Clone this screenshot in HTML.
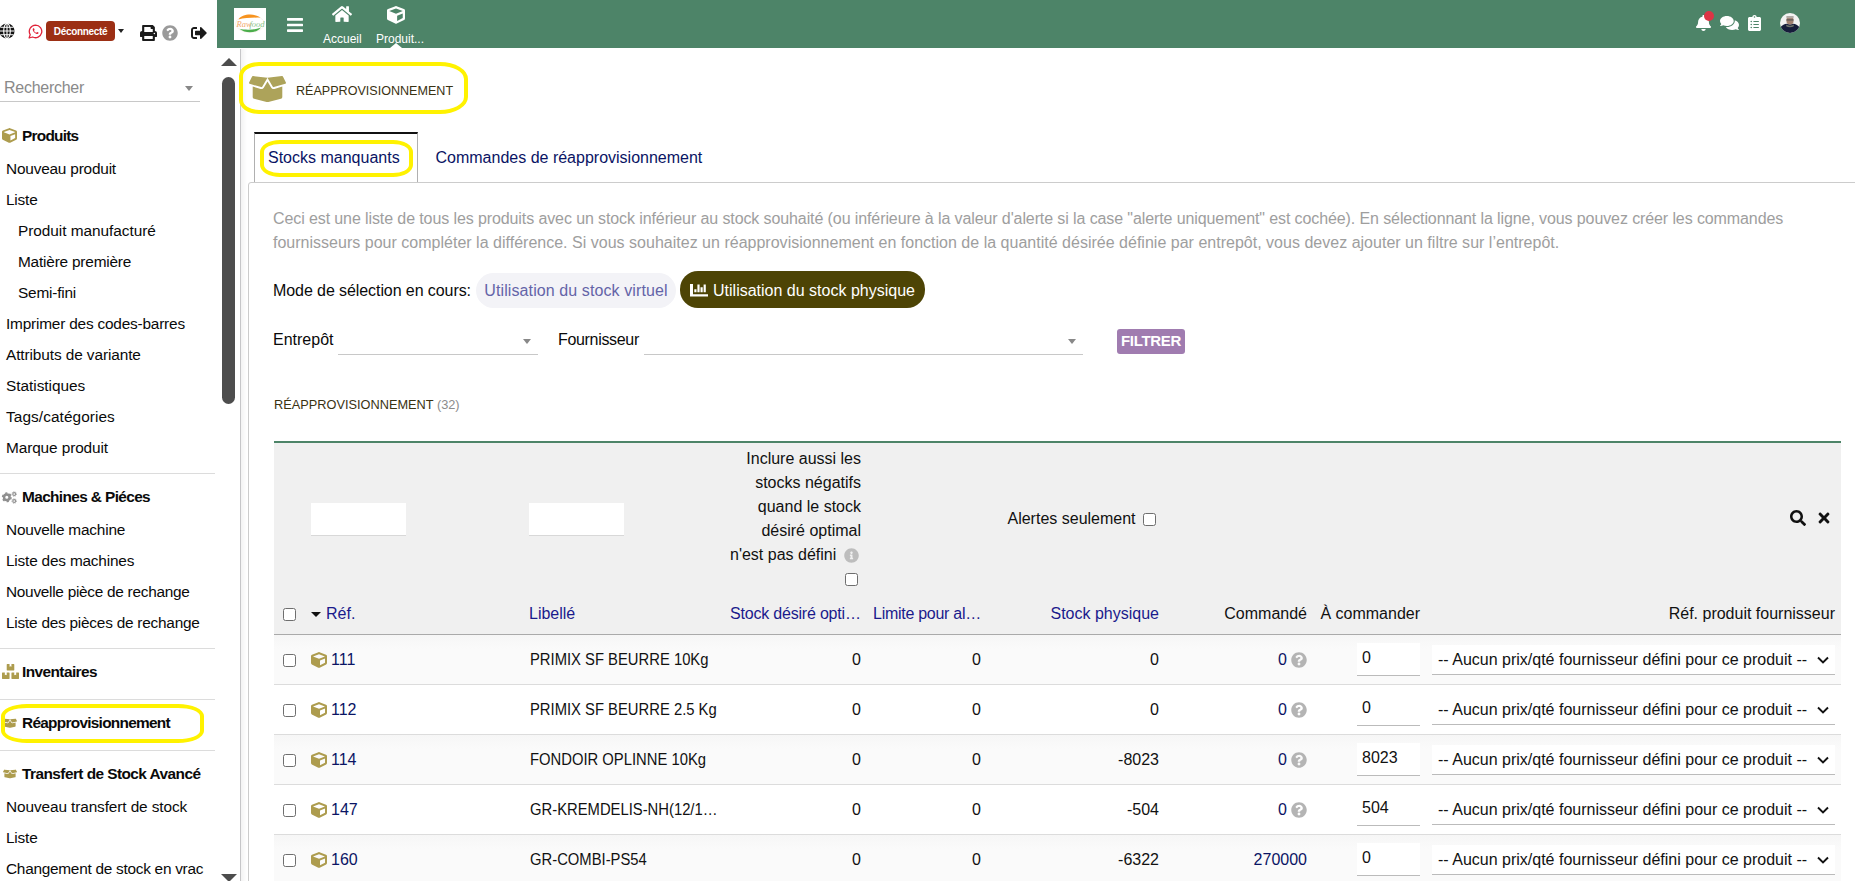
<!DOCTYPE html>
<html lang="fr">
<head>
<meta charset="utf-8">
<title>Réapprovisionnement</title>
<style>
*{box-sizing:border-box}
html,body{margin:0;padding:0}
body{width:1855px;height:881px;overflow:hidden;background:#fff;font-family:"Liberation Sans",sans-serif;color:#000;position:relative;font-size:15px}
.abs{position:absolute}
svg{display:block}
/* ---------- left column ---------- */
#left{position:absolute;left:0;top:0;width:217px;height:881px;background:#fff;overflow:hidden}
#left .ic{position:absolute}
.badge{position:absolute;left:46px;top:21px;width:69px;height:20px;border-radius:4px;background:#9c2f14;color:#fff;font-weight:700;font-size:10px;line-height:21px;text-align:center;letter-spacing:-.32px}
.search{position:absolute;left:0;top:72px;width:200px;height:30px;border-bottom:1px solid #c8c8c8}
.search span{position:absolute;left:4px;top:5px;font-size:16px;line-height:22px;color:#8a8a8a;letter-spacing:-.27px}
.search i{position:absolute;left:185px;top:14px;width:0;height:0;border-left:4px solid transparent;border-right:4px solid transparent;border-top:5px solid #888}
.menu{position:absolute;left:0;width:217px;margin:0;padding:0;list-style:none}
.menu li{position:absolute;left:6px;height:20px;line-height:20px;font-size:15.4px;letter-spacing:-.2px;white-space:nowrap;color:#0a0a0a}
.menu li.sub{left:18px}
.menu li.h{left:22px;font-weight:700;letter-spacing:-.75px}
.hr{position:absolute;left:0;width:215px;height:1px;background:#dcdcdc}
/* ---------- scrollbar ---------- */
#sb{position:absolute;left:217px;top:48px;width:23px;height:833px;background:#fff}
#sb .up{position:absolute;left:3.5px;top:10px;width:0;height:0;border-left:8px solid transparent;border-right:8px solid transparent;border-bottom:8px solid #4d4d4d}
#sb .dn{position:absolute;left:3.5px;top:826px;width:0;height:0;border-left:8px solid transparent;border-right:8px solid transparent;border-top:8px solid #4d4d4d}
#sb .th{position:absolute;left:5px;top:29px;width:13px;height:327px;border-radius:6.5px;background:#4d4d4d}
/* ---------- top bar ---------- */
#top{position:absolute;left:217px;top:0;width:1638px;height:48px;background:#4d8468}
#top .lbl{position:absolute;color:#fff;font-size:12px;line-height:14px;white-space:nowrap}
/* ---------- main ---------- */
#main{position:absolute;left:240px;top:49px;width:1615px;height:832px;border-left:1px solid #c6c6c8;background:linear-gradient(to right,#f3f3f3,#fff 6px)}
.hl{position:absolute;border:3.5px solid #fff200;border-radius:22px}

#content{position:absolute;left:0;top:0;width:1855px;height:881px}
.ttl{position:absolute;font-size:13.3px;line-height:20px;color:#3a3212;white-space:nowrap;transform-origin:0 50%;transform:scaleX(.945)}
.ttl2{position:absolute;font-size:13.3px;line-height:20px;color:#3a3212;white-space:nowrap;transform-origin:0 50%;transform:scaleX(.96)}
.ttl2 span{color:#8c8c8c}
.tabbox{position:absolute;left:248px;top:182px;width:1620px;height:720px;border:1px solid #ccc;border-radius:3px 0 0 0;background:#fff}
.tab1{position:absolute;left:254px;top:132px;width:164px;height:50px;border:1px solid #b0b0b0;border-top:2px solid #111;border-bottom:none;background:#fff}
.tabt{position:absolute;font-size:16px;line-height:20px;color:#0a1464;white-space:nowrap}
.desc{position:absolute;margin:0;font-size:16px;line-height:24px;color:#9e9e9e;white-space:nowrap;letter-spacing:-.06px}
.t16{position:absolute;font-size:16px;line-height:20px;color:#0a0a0a;white-space:nowrap}
.pill{position:absolute;height:35px;line-height:35px;border-radius:18px;text-align:center;font-size:16px;white-space:nowrap}
.p1{background:#f3f3f7;color:#6464a8;letter-spacing:.1px}
.p2{background:#4d4405;color:#fff}
.sel{position:absolute;height:29px;border-bottom:1px solid #c8c8c8}
.sel i{position:absolute;right:7px;top:13px;width:0;height:0;border-left:4px solid transparent;border-right:4px solid transparent;border-top:5px solid #888}
.btn{position:absolute;width:68px;height:25px;line-height:23px;border-radius:3px;background:#a07cb0;color:#fff;font-weight:700;font-size:15px;text-align:center;letter-spacing:-.3px}

.lst{position:absolute;left:274px;top:441px;width:1567px;table-layout:fixed;border-collapse:collapse;border-top:2px solid #4d8468;font-size:16px;color:#111}
.lst td,.lst th{padding:2px 6px 0;vertical-align:middle;white-space:nowrap;overflow:hidden;font-weight:400;line-height:24px}
.lst .r{text-align:right}.lst .l{text-align:left}
.lst thead tr{background:#f0f0f0}
.lst tr.f{height:150px}
.lst tr.h{height:41px}
.lst tr.h th{color:#1a1a8c;border-bottom:1px solid #aaa;height:42px}
.lst tr.h th.k{color:#111}
.lst tbody tr{height:50px;background:#fff}
.lst tbody tr:nth-child(odd){background:linear-gradient(#f6f6f6,#fafafa 30%,#fafafa)}
.lst tbody td{border-bottom:1px solid #dcdcdc;height:50px}
.lst a{color:#0a1464}
.ck{display:inline-block;width:13px;height:13px;border:1px solid #6e6e6e;border-radius:2.5px;background:#fff;vertical-align:-2px;margin:0 3px}
.inp{position:relative;top:1px;display:inline-block;width:95px;height:33px;background:#fff;border-bottom:1px solid #d8d8d8;vertical-align:middle}
.car{display:inline-block;width:0;height:0;border-left:5px solid transparent;border-right:5px solid transparent;border-top:5.5px solid #111;margin-right:5px;margin-left:0;vertical-align:2px}
.cb{display:inline-block;vertical-align:-3px;margin-right:4px}
.q{display:inline-block;vertical-align:-3px;margin-left:4px}
.inf{display:inline-block;vertical-align:-3px;margin:0 4px 0 3px}
.si{display:inline-block;vertical-align:middle;margin-right:12px;position:relative;top:-1px}
.xi{display:inline-block;vertical-align:middle;margin-right:5px;position:relative;top:-1px}
.nm{display:inline-block;transform-origin:0 50%;transform:scaleX(.925);vertical-align:middle;margin-left:.5px}
.qty{position:relative;top:-1px;display:inline-block;width:63px;height:33px;line-height:30px;background:#fff;border-bottom:1px solid #bbb;text-align:left;padding-left:5px;vertical-align:middle}
.slc{display:inline-block;width:403px;height:30px;line-height:29px;background:#fff;border-bottom:1px solid #bbb;text-align:left;padding-left:6px;vertical-align:middle;position:relative}
.chv{position:absolute;right:6px;top:11px}
</style>
</head>
<body>
<div id="left">
<!-- globe -->
<svg class="ic" style="left:-1px;top:23px" width="16" height="16" viewBox="0 0 16 16"><circle cx="8" cy="8" r="7.6" fill="#111"/><g stroke="#fff" stroke-width="1.1" fill="none"><ellipse cx="8" cy="8" rx="3.3" ry="7.6"/><path d="M8 .4v15.200M.4 8h15.200M1.500 4.300h13M1.500 11.700h13"/></g></svg>
<!-- whatsapp -->
<svg class="ic" style="left:28px;top:24px" width="15" height="15" viewBox="0 0 15 15"><path d="M7.600 1.100a6.300 6.300 0 0 0-5.400 9.500L1.100 14l3.500-1a6.300 6.300 0 1 0 3-11.900z" fill="none" stroke="#e0243a" stroke-width="1.300" stroke-linejoin="round"/><path d="M5.500 4.300c-.3 0-.8.500-.8 1.300 0 1 .8 2.300 1.900 3.200 1.100.9 2.300 1.300 2.900 1.200.6-.1 1.100-.600 1.100-1 0-.2-.1-.3-.3-.4l-1-.5c-.2-.1-.4 0-.5.100l-.4.500c-.1.100-.3.100-.4 0-.9-.4-1.500-1-1.900-1.800-.1-.1 0-.3.100-.4l.3-.4c.1-.1.100-.3.100-.4l-.5-1.100c-.1-.2-.3-.3-.6-.3z" fill="#e0243a"/></svg>
<div class="badge">Déconnecté</div>
<i class="abs" style="left:118px;top:29px;width:0;height:0;border-left:3.5px solid transparent;border-right:3.5px solid transparent;border-top:4px solid #222"></i>
<!-- print -->
<svg class="ic" style="left:140px;top:25px" width="17" height="16" viewBox="0 0 512 512" preserveAspectRatio="none"><path fill="#1b1b1b" d="M448 192V77.250c0-8.490-3.370-16.620-9.370-22.630L393.370 9.370c-6-6-14.140-9.370-22.630-9.370H96C78.330 0 64 14.330 64 32v160c-35.350 0-64 28.650-64 64v112c0 8.840 7.160 16 16 16h48v96c0 17.670 14.330 32 32 32h320c17.670 0 32-14.330 32-32v-96h48c8.840 0 16-7.160 16-16V256c0-35.350-28.650-64-64-64zm-64 256H128v-96h256v96zm0-224H128V64h192v48c0 8.840 7.160 16 16 16h48v96zm48 72c-13.250 0-24-10.750-24-24 0-13.260 10.750-24 24-24s24 10.740 24 24c0 13.250-10.750 24-24 24z"/></svg>
<!-- question -->
<svg class="ic" style="left:162px;top:25px" width="16" height="16" viewBox="0 0 512 512"><path fill="#9a9a9a" d="M504 256c0 136.997-111.043 248-248 248S8 392.997 8 256C8 119.083 119.043 8 256 8s248 111.083 248 248zM262.655 90c-54.497 0-89.255 22.957-116.549 63.758-3.536 5.286-2.353 12.415 2.715 16.258l34.699 26.310c5.205 3.947 12.621 3.008 16.665-2.122 17.864-22.658 30.113-35.797 57.303-35.797 20.429 0 45.698 13.148 45.698 32.958 0 14.976-12.363 22.667-32.534 33.976C247.128 238.528 216 254.941 216 296v4c0 6.627 5.373 12 12 12h56c6.627 0 12-5.373 12-12v-1.333c0-28.462 83.186-29.647 83.186-106.667 0-58.002-60.165-102-116.531-102zM256 338c-25.365 0-46 20.635-46 46 0 25.364 20.635 46 46 46s46-20.636 46-46c0-25.365-20.635-46-46-46z"/></svg>
<!-- sign-out -->
<svg class="ic" style="left:191px;top:25px" width="16" height="16" viewBox="0 0 512 512"><path fill="#1b1b1b" d="M497 273L329 441c-15 15-41 4.500-41-17v-96H152c-13.300 0-24-10.700-24-24v-96c0-13.300 10.700-24 24-24h136V88c0-21.400 25.900-32 41-17l168 168c9.300 9.400 9.300 24.600 0 34zM192 436v-40c0-6.600-5.400-12-12-12H96c-17.700 0-32-14.300-32-32V160c0-17.700 14.300-32 32-32h84c6.600 0 12-5.400 12-12V76c0-6.600-5.400-12-12-12H96c-53 0-96 43-96 96v192c0 53 43 96 96 96h84c6.600 0 12-5.400 12-12z"/></svg>

<div class="search"><span>Rechercher</span><i></i></div>

<svg class="ic" style="left:2px;top:128px" width="15" height="15" viewBox="0 0 512 512"><path fill="#ad9c4e" d="M239.100 6.300l-208 78c-18.700 7-31.100 25-31.100 45v225.100c0 18.200 10.300 34.800 26.500 42.900l208 104c13.500 6.800 29.400 6.800 42.900 0l208-104c16.300-8.100 26.500-24.800 26.500-42.900V129.300c0-20-12.400-37.900-31.100-44.900l-208-78C262 2.200 250 2.200 239.100 6.300zM256 68.400l192 72v1.100l-192 78-192-78v-1.100l192-72zm32 356V275.500l160-65v133.900l-160 80z"/></svg>
<ul class="menu" style="top:0">
<li class="h" style="top:126px">Produits</li>
<li style="top:159px">Nouveau produit</li>
<li style="top:190px">Liste</li>
<li class="sub" style="top:221px;letter-spacing:-0.04px">Produit manufacturé</li>
<li class="sub" style="top:252px">Matière première</li>
<li class="sub" style="top:283px">Semi-fini</li>
<li style="top:314px">Imprimer des codes-barres</li>
<li style="top:345px;letter-spacing:-0.1px">Attributs de variante</li>
<li style="top:376px;letter-spacing:-0.03px">Statistiques</li>
<li style="top:407px;letter-spacing:0.07px">Tags/catégories</li>
<li style="top:438px;letter-spacing:-0.11px">Marque produit</li>
<li class="h" style="top:487px;letter-spacing:-.62px">Machines &amp; Piéces</li>
<li style="top:520px">Nouvelle machine</li>
<li style="top:551px">Liste des machines</li>
<li style="top:582px;letter-spacing:-0.28px">Nouvelle pièce de rechange</li>
<li style="top:613px;letter-spacing:-0.235px">Liste des pièces de rechange</li>
<li class="h" style="top:662px;letter-spacing:-.57px">Inventaires</li>
<li class="h" style="top:713px;letter-spacing:-.72px">Réapprovisionnement</li>
<li class="h" style="top:764px;letter-spacing:-.55px">Transfert de Stock Avancé</li>
<li style="top:797px;letter-spacing:-0.11px">Nouveau transfert de stock</li>
<li style="top:828px">Liste</li>
<li style="top:859px;letter-spacing:-0.27px">Changement de stock en vrac</li>
</ul>
<div class="hr" style="top:473px"></div>
<div class="hr" style="top:648px"></div>
<div class="hr" style="top:699px"></div>
<div class="hr" style="top:750px"></div>
<!-- cogs -->
<svg class="ic" style="left:1px;top:491px" width="16" height="13" viewBox="0 0 16 13"><g fill="none" stroke="#8f8f8f"><circle cx="5.800" cy="6.300" r="2.800" stroke-width="2.500"/><circle cx="5.800" cy="6.300" r="4.300" stroke-width="1.400" stroke-dasharray="2.250 2.253"/><circle cx="13.200" cy="3" r="1.400" stroke-width="1.100"/><circle cx="13.200" cy="3" r="2.300" stroke-width=".800" stroke-dasharray=".900 .906"/><circle cx="13.200" cy="10" r="1.400" stroke-width="1.100"/><circle cx="13.200" cy="10" r="2.300" stroke-width=".800" stroke-dasharray=".900 .906"/></g></svg>
<!-- boxes -->
<svg class="ic" style="left:2px;top:664px" width="17" height="15" viewBox="0 0 576 512" preserveAspectRatio="none"><path fill="#ad9c4e" d="M560 288h-80v96l-32-21.300-32 21.300v-96h-80c-8.800 0-16 7.200-16 16v192c0 8.800 7.200 16 16 16h224c8.800 0 16-7.200 16-16V304c0-8.800-7.200-16-16-16zm-384-64h224c8.800 0 16-7.200 16-16V16c0-8.800-7.200-16-16-16h-80v96l-32-21.300L256 96V0h-80c-8.800 0-16 7.200-16 16v192c0 8.800 7.200 16 16 16zm64 64h-80v96l-32-21.300L96 384v-96H16c-8.800 0-16 7.200-16 16v192c0 8.800 7.200 16 16 16h224c8.800 0 16-7.200 16-16V304c0-8.800-7.200-16-16-16z"/></svg>
<!-- box-open small x2 -->
<svg class="ic" style="left:3px;top:718px" width="14" height="10.500" viewBox="0 0 640 512" preserveAspectRatio="none"><path fill="#ad9c4e" d="M425.700 256c-16.900 0-32.800-9-41.400-23.400L320 126l-64.200 106.600c-8.700 14.500-24.600 23.500-41.500 23.500-4.500 0-9-.6-13.300-1.900L64 215v178c0 14.700 10 27.500 24.200 31l216.200 54.100c10.200 2.500 20.900 2.500 31 0L551.800 424c14.200-3.600 24.200-16.400 24.200-31V215l-137 39.100c-4.300 1.300-8.800 1.900-13.300 1.900zm212.600-112.200L586.800 41c-3.100-6.200-9.800-9.800-16.700-8.900L320 64l91.700 152.100c3.800 6.300 11.400 9.300 18.500 7.300l197.900-56.500c9.900-2.900 14.700-13.900 10.200-23.100zM53.200 41L1.700 143.800c-4.600 9.200.3 20.200 10.100 23l197.900 56.500c7.100 2 14.700-1 18.500-7.300L320 64 69.800 32.100c-6.900-.8-13.500 2.700-16.600 8.900z"/></svg>
<svg class="ic" style="left:3px;top:769px" width="14" height="10" viewBox="0 0 640 512" preserveAspectRatio="none"><path fill="#ad9c4e" d="M425.700 256c-16.900 0-32.800-9-41.400-23.400L320 126l-64.200 106.600c-8.700 14.500-24.600 23.500-41.500 23.500-4.500 0-9-.6-13.300-1.900L64 215v178c0 14.700 10 27.500 24.200 31l216.200 54.100c10.200 2.500 20.900 2.500 31 0L551.800 424c14.200-3.600 24.200-16.400 24.200-31V215l-137 39.100c-4.300 1.300-8.800 1.900-13.300 1.900zm212.600-112.200L586.800 41c-3.100-6.200-9.800-9.800-16.700-8.900L320 64l91.700 152.100c3.800 6.300 11.400 9.300 18.500 7.300l197.900-56.500c9.900-2.900 14.700-13.900 10.200-23.100zM53.200 41L1.700 143.800c-4.600 9.200.3 20.200 10.100 23l197.900 56.500c7.100 2 14.700-1 18.500-7.300L320 64 69.800 32.100c-6.900-.8-13.500 2.700-16.600 8.900z"/></svg>
<div class="hl" style="left:1px;top:704px;width:203px;height:38.500px;border-width:4.500px;border-radius:26px / 12px"></div>
</div>
<div id="sb"><div class="up"></div><div class="th"></div><div class="dn"></div></div>
<div id="top">
<!-- logo -->
<div class="abs" style="left:17px;top:8px;width:32px;height:32px;background:#fff;overflow:hidden">
<svg width="32" height="32" viewBox="0 0 32 32"><ellipse cx="16" cy="15.800" rx="14.500" ry="8.600" fill="none" stroke="#f4ece4" stroke-width=".700"/><path d="M4.500 11.500C8 5.500 20 5 26.500 9.500 20 9.600 10 9.800 4.500 11.500z" fill="#f7931e"/><path d="M5.500 20.800c6 5.200 17 4.600 21.500-1.300-5 2.300-15 2.800-21.500 1.300z" fill="#4cae4c"/><text x="2.500" y="18.800" font-family="Liberation Serif,serif" font-style="italic" font-size="8.500" fill="#f2a05a" opacity=".9">Raw</text><text x="15.500" y="18.800" font-family="Liberation Serif,serif" font-style="italic" font-size="8.500" fill="#7cc07c" opacity=".9">food</text></svg>
</div>
<!-- bars -->
<svg class="abs" style="left:70px;top:16px" width="16" height="18" viewBox="0 0 448 512" preserveAspectRatio="none"><path fill="#fff" d="M16 132h416c8.837 0 16-7.163 16-16V76c0-8.837-7.163-16-16-16H16C7.163 60 0 67.163 0 76v40c0 8.837 7.163 16 16 16zm0 160h416c8.837 0 16-7.163 16-16v-40c0-8.837-7.163-16-16-16H16c-8.837 0-16 7.163-16 16v40c0 8.837 7.163 16 16 16zm0 160h416c8.837 0 16-7.163 16-16v-40c0-8.837-7.163-16-16-16H16c-8.837 0-16 7.163-16 16v40c0 8.837 7.163 16 16 16z"/></svg>
<!-- home -->
<svg class="abs" style="left:115px;top:5px" width="20" height="18" viewBox="0 0 576 512" preserveAspectRatio="none"><path fill="#fff" d="M280.370 148.260L96 300.110V464a16 16 0 0 0 16 16l112.060-.290a16 16 0 0 0 15.920-16V368a16 16 0 0 1 16-16h64a16 16 0 0 1 16 16v95.640a16 16 0 0 0 16 16.050L464 480a16 16 0 0 0 16-16V300L295.670 148.260a12.190 12.190 0 0 0-15.300 0zM571.600 251.470L488 182.560V44.050a12 12 0 0 0-12-12h-56a12 12 0 0 0-12 12v72.610L318.470 43a48 48 0 0 0-61 0L4.340 251.470a12 12 0 0 0-1.600 16.900l25.500 31A12 12 0 0 0 45.150 301l235.220-193.740a12.190 12.190 0 0 1 15.300 0L530.900 301a12 12 0 0 0 16.900-1.600l25.500-31a12 12 0 0 0-1.700-16.930z"/></svg>
<div class="lbl" style="left:106px;top:32px">Accueil</div>
<!-- cube -->
<svg class="abs" style="left:170px;top:6px" width="18" height="18" viewBox="0 0 512 512"><path fill="#fff" d="M239.100 6.300l-208 78c-18.700 7-31.100 25-31.100 45v225.100c0 18.200 10.300 34.800 26.500 42.900l208 104c13.500 6.800 29.400 6.800 42.900 0l208-104c16.300-8.100 26.500-24.800 26.500-42.900V129.300c0-20-12.400-37.900-31.100-44.900l-208-78C262 2.200 250 2.200 239.100 6.300zM256 68.400l192 72v1.100l-192 78-192-78v-1.100l192-72zm32 356V275.500l160-65v133.900l-160 80z"/></svg>
<div class="lbl" style="left:159px;top:32px">Produit...</div>
<i class="abs" style="left:173px;top:43px;width:0;height:0;border-left:6px solid transparent;border-right:6px solid transparent;border-bottom:5px solid #fff"></i>
<!-- bell -->
<svg class="abs" style="left:1479px;top:15px" width="15" height="16" viewBox="0 0 448 512" preserveAspectRatio="none"><path fill="#fff" d="M224 512c35.320 0 63.970-28.650 63.970-64H160.030c0 35.350 28.650 64 63.970 64zm215.390-149.710c-19.320-20.760-55.470-51.990-55.470-154.290 0-77.700-54.480-139.900-127.940-155.160V32c0-17.670-14.320-32-31.980-32s-31.980 14.330-31.980 32v20.840C118.560 68.100 64.080 130.300 64.080 208c0 102.300-36.150 133.530-55.470 154.290-6 6.450-8.660 14.160-8.610 21.710.11 16.400 12.980 32 32.100 32h383.800c19.120 0 32-15.600 32.100-32 .05-7.550-2.610-15.270-8.610-21.710z"/></svg>
<div class="abs" style="left:1487px;top:11px;width:10px;height:10px;border-radius:5px;background:#dc3545"></div>
<!-- comments -->
<svg class="abs" style="left:1503px;top:15px" width="19" height="16" viewBox="0 0 576 512" preserveAspectRatio="none"><path fill="#fff" d="M416 192c0-88.400-93.100-160-208-160S0 103.600 0 192c0 34.300 14.100 65.900 38 92-13.400 30.200-35.500 54.200-35.800 54.500-2.200 2.300-2.800 5.700-1.500 8.700S4.800 352 8 352c36.600 0 66.900-12.300 88.700-25 32.200 15.700 70.300 25 111.300 25 114.900 0 208-71.600 208-160zm122 220c23.900-26 38-57.700 38-92 0-66.900-53.500-124.200-129.300-148.100.9 6.600 1.300 13.300 1.300 20.100 0 105.900-107.700 192-240 192-10.800 0-21.300-.8-31.700-1.900C207.800 439.600 281.800 480 368 480c41 0 79.100-9.200 111.300-25 21.800 12.700 52.100 25 88.700 25 3.200 0 6.100-1.900 7.300-4.800 1.300-2.900.7-6.300-1.500-8.700-.3-.3-22.400-24.200-35.800-54.500z"/></svg>
<!-- clipboard -->
<svg class="abs" style="left:1531px;top:15px" width="13" height="16" viewBox="0 0 384 512" preserveAspectRatio="none"><path fill="#fff" d="M336 64h-80c0-35.300-28.700-64-64-64s-64 28.700-64 64H48C21.500 64 0 85.500 0 112v352c0 26.500 21.500 48 48 48h288c26.500 0 48-21.500 48-48V112c0-26.500-21.500-48-48-48zM96 424c-13.300 0-24-10.700-24-24s10.700-24 24-24 24 10.700 24 24-10.700 24-24 24zm0-96c-13.300 0-24-10.700-24-24s10.700-24 24-24 24 10.700 24 24-10.700 24-24 24zm0-96c-13.300 0-24-10.700-24-24s10.700-24 24-24 24 10.700 24 24-10.700 24-24 24zm96-192c13.300 0 24 10.700 24 24s-10.700 24-24 24-24-10.700-24-24 10.700-24 24-24zm128 368c0 4.400-3.600 8-8 8H168c-4.400 0-8-3.600-8-8v-16c0-4.400 3.600-8 8-8h144c4.400 0 8 3.600 8 8v16zm0-96c0 4.400-3.600 8-8 8H168c-4.400 0-8-3.600-8-8v-16c0-4.400 3.600-8 8-8h144c4.400 0 8 3.600 8 8v16zm0-96c0 4.400-3.600 8-8 8H168c-4.400 0-8-3.600-8-8v-16c0-4.400 3.600-8 8-8h144c4.400 0 8 3.600 8 8v16z"/></svg>
<!-- avatar -->
<svg class="abs" style="left:1563px;top:13px" width="20" height="20" viewBox="0 0 20 20"><defs><clipPath id="av"><circle cx="10" cy="10" r="10"/></clipPath></defs><g clip-path="url(#av)"><rect width="20" height="20" fill="#f2f2f2"/><ellipse cx="10" cy="7.500" rx="3.600" ry="4.300" fill="#a08070"/><rect x="6.400" y="3" width="7.200" height="2.200" fill="#b0aaa6"/><rect x="6.500" y="6.300" width="7" height="1.200" fill="#555"/><path d="M0 20v-5c2-3 5-4 6.500-4.200l3.500 1 3.500-1c1.500.2 4.500 1.200 6.500 4.200v5z" fill="#161c3a"/><path d="M6 11.500c2 1.500 6 1.500 8 0l-.5 2c-2 1-5 1-7 0z" fill="#6f746c"/></g></svg>
</div>
<div id="main"></div>
<div id="content">
<!-- page title -->
<svg class="abs" style="left:249px;top:76px" width="37" height="26" viewBox="0 32 640 448" preserveAspectRatio="none"><path fill="#ada35a" d="M425.700 256c-16.900 0-32.800-9-41.400-23.400L320 126l-64.200 106.600c-8.700 14.500-24.600 23.500-41.500 23.500-4.500 0-9-.6-13.300-1.900L64 215v178c0 14.700 10 27.500 24.200 31l216.200 54.100c10.200 2.500 20.900 2.500 31 0L551.800 424c14.200-3.600 24.200-16.400 24.200-31V215l-137 39.100c-4.300 1.300-8.800 1.900-13.300 1.900zm212.600-112.200L586.800 41c-3.100-6.200-9.800-9.800-16.700-8.900L320 64l91.700 152.100c3.800 6.300 11.400 9.300 18.500 7.300l197.900-56.500c9.900-2.900 14.700-13.900 10.200-23.100zM53.200 41L1.700 143.800c-4.600 9.200.3 20.200 10.100 23l197.900 56.500c7.100 2 14.700-1 18.500-7.300L320 64 69.800 32.100c-6.900-.8-13.500 2.700-16.600 8.900z"/></svg>
<div class="ttl" style="left:296px;top:81px">RÉAPPROVISIONNEMENT</div>
<div class="hl" style="left:239px;top:62px;width:229px;height:52px;border-width:4.800px;border-radius:20px 28px 28px 20px / 14px 17px 17px 14px"></div>

<!-- tabs -->
<div class="tabbox"></div>
<div class="tab1"></div>
<div class="tabt" style="left:268px;top:148px">Stocks manquants</div>
<div class="tabt" style="left:435.500px;top:148px">Commandes de réapprovisionnement</div>
<div class="hl" style="left:260px;top:140px;width:153px;height:36.500px;border-width:4.800px;border-radius:20px / 12px"></div>

<p class="desc" style="left:273px;top:207px"><span style="letter-spacing:-.102px">Ceci est une liste de tous les produits avec un stock inférieur au stock souhaité (ou inférieure à la valeur d'alerte si la case "alerte uniquement" est cochée). En sélectionnant la ligne, vous pouvez créer les commandes</span><br><span style="letter-spacing:.012px">fournisseurs pour compléter la différence. Si vous souhaitez un réapprovisionnement en fonction de la quantité désirée définie par entrepôt, vous devez ajouter un filtre sur l’entrepôt.</span></p>

<div class="t16" style="left:273px;top:281px;letter-spacing:-.08px">Mode de sélection en cours:</div>
<div class="pill p1" style="left:476px;top:273px;width:200px">Utilisation du stock virtuel</div>
<div class="pill p2" style="left:680px;top:271px;width:245px;height:37px;line-height:39px"><svg width="18" height="12.500" viewBox="0 0 18 12.500" style="display:inline-block;vertical-align:-.5px;margin-right:5px"><path fill="#fff" d="M0 0h3v10.200h15v2.300H0zM4.300 5.200h2.200v3h-2.200zM7.400 .500h2.200v7.700h-2.200zM10.500 3.300h2.200v4.900h-2.200zM13.600 .500h2.200v7.700h-2.200z"/></svg>Utilisation du stock physique</div>

<div class="t16" style="left:273px;top:330px">Entrepôt</div>
<div class="sel" style="left:338px;top:326px;width:200px"><i></i></div>
<div class="t16" style="left:558px;top:330px;letter-spacing:-.32px">Fournisseur</div>
<div class="sel" style="left:644px;top:326px;width:439px"><i></i></div>
<div class="btn" style="left:1117px;top:329px">FILTRER</div>

<div class="ttl2" style="left:274px;top:395px">RÉAPPROVISIONNEMENT <span>(32)</span></div>
<table class="lst"><colgroup><col style="width:31px"><col style="width:218px"><col style="width:201px"><col style="width:143px"><col style="width:120px"><col style="width:178px"><col style="width:148px"><col style="width:113px"><col style="width:415px"></colgroup>
<thead><tr class="f"><td></td><td><span class="inp"></span></td><td><span class="inp"></span></td><td class="r">Inclure aussi les<br>stocks négatifs<br>quand le stock<br>désiré optimal<br>n'est pas défini <svg class="inf" width="15" height="15" viewBox="0 0 512 512"><path fill="#bdbdbd" d="M256 8C119.043 8 8 119.083 8 256c0 136.997 111.043 248 248 248s248-111.003 248-248C504 119.083 392.957 8 256 8zm0 110c23.196 0 42 18.804 42 42s-18.804 42-42 42-42-18.804-42-42 18.804-42 42-42zm56 254c0 6.627-5.373 12-12 12h-88c-6.627 0-12-5.373-12-12v-24c0-6.627 5.373-12 12-12h12v-64h-12c-6.627 0-12-5.373-12-12v-24c0-6.627 5.373-12 12-12h64c6.627 0 12 5.373 12 12v100h12c6.627 0 12 5.373 12 12v24z"/></svg><br><span class="ck"></span></td><td></td><td class="r">Alertes seulement <span class="ck"></span></td><td></td><td></td><td class="r"><svg class="si" width="16" height="16" viewBox="0 0 512 512"><path fill="#111" d="M505 442.700L405.300 343c-4.500-4.500-10.600-7-17-7H372c27.600-35.300 44-79.700 44-128C416 93.100 322.900 0 208 0S0 93.100 0 208s93.100 208 208 208c48.300 0 92.700-16.400 128-44v16.300c0 6.400 2.500 12.500 7 17l99.700 99.700c9.400 9.400 24.600 9.400 33.900 0l28.300-28.300c9.400-9.400 9.400-24.600.1-34zM208 336c-70.700 0-128-57.200-128-128 0-70.700 57.200-128 128-128 70.700 0 128 57.200 128 128 0 70.700-57.200 128-128 128z"/></svg><svg class="xi" width="12" height="16" viewBox="0 0 352 512"><path fill="#111" d="M242.720 256l100.070-100.070c12.280-12.280 12.280-32.190 0-44.480l-22.240-22.240c-12.280-12.280-32.190-12.280-44.480 0L176 189.280 75.930 89.210c-12.280-12.280-32.190-12.280-44.480 0L9.210 111.450c-12.280 12.280-12.280 32.190 0 44.480L109.280 256 9.210 356.070c-12.280 12.280-12.280 32.190 0 44.480l22.240 22.240c12.280 12.280 32.200 12.280 44.480 0L176 322.720l100.070 100.070c12.280 12.280 32.200 12.280 44.480 0l22.240-22.240c12.280-12.280 12.280-32.190 0-44.480L242.720 256z"/></svg></td></tr>
<tr class="h"><th><span class="ck"></span></th><th class="l"><i class="car"></i>Réf.</th><th class="l">Libellé</th><th class="r" style="letter-spacing:-.2px;padding-right:8px">Stock désiré opti…</th><th class="r" style="letter-spacing:-.27px">Limite pour al…</th><th class="r">Stock physique</th><th class="r k">Commandé</th><th class="r k">À commander</th><th class="r k">Réf. produit fournisseur</th></tr></thead><tbody>
<tr><td><span class="ck"></span></td><td class="l"><svg class="cb" width="16" height="16" viewBox="0 0 512 512"><path fill="#ad9c4e" d="M239.100 6.300l-208 78c-18.700 7-31.100 25-31.100 45v225.100c0 18.200 10.300 34.800 26.500 42.900l208 104c13.500 6.800 29.400 6.800 42.900 0l208-104c16.300-8.100 26.500-24.800 26.500-42.900V129.300c0-20-12.400-37.900-31.100-44.900l-208-78C262 2.200 250 2.200 239.100 6.300zM256 68.400l192 72v1.100l-192 78-192-78v-1.100l192-72zm32 356V275.500l160-65v133.900l-160 80z"/></svg><a>111</a></td><td class="l"><span class="nm">PRIMIX SF BEURRE 10Kg</span></td><td class="r">0</td><td class="r">0</td><td class="r">0</td><td class="r"><a>0</a><svg class="q" width="16" height="16" viewBox="0 0 512 512"><path fill="#b4b4b4" d="M504 256c0 136.997-111.043 248-248 248S8 392.997 8 256C8 119.083 119.043 8 256 8s248 111.083 248 248zM262.655 90c-54.497 0-89.255 22.957-116.549 63.758-3.536 5.286-2.353 12.415 2.715 16.258l34.699 26.310c5.205 3.947 12.621 3.008 16.665-2.122 17.864-22.658 30.113-35.797 57.303-35.797 20.429 0 45.698 13.148 45.698 32.958 0 14.976-12.363 22.667-32.534 33.976C247.128 238.528 216 254.941 216 296v4c0 6.627 5.373 12 12 12h56c6.627 0 12-5.373 12-12v-1.333c0-28.462 83.186-29.647 83.186-106.667 0-58.002-60.165-102-116.531-102zM256 338c-25.365 0-46 20.635-46 46 0 25.364 20.635 46 46 46s46-20.636 46-46c0-25.365-20.635-46-46-46z"/></svg></td><td class="r"><span class="qty">0</span></td><td class="r"><span class="slc">-- Aucun prix/qté fournisseur défini pour ce produit --<svg class="chv" width="12" height="8" viewBox="0 0 12 8"><path d="M1 1.500l5 5 5-5" fill="none" stroke="#111" stroke-width="1.900"/></svg></span></td></tr>
<tr><td><span class="ck"></span></td><td class="l"><svg class="cb" width="16" height="16" viewBox="0 0 512 512"><path fill="#ad9c4e" d="M239.100 6.300l-208 78c-18.700 7-31.100 25-31.100 45v225.100c0 18.200 10.300 34.800 26.500 42.900l208 104c13.500 6.800 29.400 6.800 42.900 0l208-104c16.300-8.100 26.500-24.800 26.500-42.900V129.300c0-20-12.400-37.900-31.100-44.900l-208-78C262 2.200 250 2.200 239.100 6.300zM256 68.400l192 72v1.100l-192 78-192-78v-1.100l192-72zm32 356V275.500l160-65v133.900l-160 80z"/></svg><a>112</a></td><td class="l"><span class="nm">PRIMIX SF BEURRE 2.5 Kg</span></td><td class="r">0</td><td class="r">0</td><td class="r">0</td><td class="r"><a>0</a><svg class="q" width="16" height="16" viewBox="0 0 512 512"><path fill="#b4b4b4" d="M504 256c0 136.997-111.043 248-248 248S8 392.997 8 256C8 119.083 119.043 8 256 8s248 111.083 248 248zM262.655 90c-54.497 0-89.255 22.957-116.549 63.758-3.536 5.286-2.353 12.415 2.715 16.258l34.699 26.310c5.205 3.947 12.621 3.008 16.665-2.122 17.864-22.658 30.113-35.797 57.303-35.797 20.429 0 45.698 13.148 45.698 32.958 0 14.976-12.363 22.667-32.534 33.976C247.128 238.528 216 254.941 216 296v4c0 6.627 5.373 12 12 12h56c6.627 0 12-5.373 12-12v-1.333c0-28.462 83.186-29.647 83.186-106.667 0-58.002-60.165-102-116.531-102zM256 338c-25.365 0-46 20.635-46 46 0 25.364 20.635 46 46 46s46-20.636 46-46c0-25.365-20.635-46-46-46z"/></svg></td><td class="r"><span class="qty">0</span></td><td class="r"><span class="slc">-- Aucun prix/qté fournisseur défini pour ce produit --<svg class="chv" width="12" height="8" viewBox="0 0 12 8"><path d="M1 1.500l5 5 5-5" fill="none" stroke="#111" stroke-width="1.900"/></svg></span></td></tr>
<tr><td><span class="ck"></span></td><td class="l"><svg class="cb" width="16" height="16" viewBox="0 0 512 512"><path fill="#ad9c4e" d="M239.100 6.300l-208 78c-18.700 7-31.100 25-31.100 45v225.100c0 18.200 10.300 34.800 26.500 42.900l208 104c13.500 6.800 29.400 6.800 42.900 0l208-104c16.300-8.100 26.500-24.800 26.500-42.900V129.300c0-20-12.400-37.900-31.100-44.900l-208-78C262 2.200 250 2.200 239.100 6.300zM256 68.400l192 72v1.100l-192 78-192-78v-1.100l192-72zm32 356V275.500l160-65v133.900l-160 80z"/></svg><a>114</a></td><td class="l"><span class="nm">FONDOIR OPLINNE 10Kg</span></td><td class="r">0</td><td class="r">0</td><td class="r">-8023</td><td class="r"><a>0</a><svg class="q" width="16" height="16" viewBox="0 0 512 512"><path fill="#b4b4b4" d="M504 256c0 136.997-111.043 248-248 248S8 392.997 8 256C8 119.083 119.043 8 256 8s248 111.083 248 248zM262.655 90c-54.497 0-89.255 22.957-116.549 63.758-3.536 5.286-2.353 12.415 2.715 16.258l34.699 26.310c5.205 3.947 12.621 3.008 16.665-2.122 17.864-22.658 30.113-35.797 57.303-35.797 20.429 0 45.698 13.148 45.698 32.958 0 14.976-12.363 22.667-32.534 33.976C247.128 238.528 216 254.941 216 296v4c0 6.627 5.373 12 12 12h56c6.627 0 12-5.373 12-12v-1.333c0-28.462 83.186-29.647 83.186-106.667 0-58.002-60.165-102-116.531-102zM256 338c-25.365 0-46 20.635-46 46 0 25.364 20.635 46 46 46s46-20.636 46-46c0-25.365-20.635-46-46-46z"/></svg></td><td class="r"><span class="qty">8023</span></td><td class="r"><span class="slc">-- Aucun prix/qté fournisseur défini pour ce produit --<svg class="chv" width="12" height="8" viewBox="0 0 12 8"><path d="M1 1.500l5 5 5-5" fill="none" stroke="#111" stroke-width="1.900"/></svg></span></td></tr>
<tr><td><span class="ck"></span></td><td class="l"><svg class="cb" width="16" height="16" viewBox="0 0 512 512"><path fill="#ad9c4e" d="M239.100 6.300l-208 78c-18.700 7-31.100 25-31.100 45v225.100c0 18.200 10.300 34.800 26.500 42.900l208 104c13.500 6.800 29.400 6.800 42.900 0l208-104c16.300-8.100 26.500-24.800 26.500-42.900V129.300c0-20-12.400-37.900-31.100-44.900l-208-78C262 2.200 250 2.200 239.100 6.300zM256 68.400l192 72v1.100l-192 78-192-78v-1.100l192-72zm32 356V275.500l160-65v133.900l-160 80z"/></svg><a>147</a></td><td class="l"><span class="nm">GR-KREMDELIS-NH(12/1…</span></td><td class="r">0</td><td class="r">0</td><td class="r">-504</td><td class="r"><a>0</a><svg class="q" width="16" height="16" viewBox="0 0 512 512"><path fill="#b4b4b4" d="M504 256c0 136.997-111.043 248-248 248S8 392.997 8 256C8 119.083 119.043 8 256 8s248 111.083 248 248zM262.655 90c-54.497 0-89.255 22.957-116.549 63.758-3.536 5.286-2.353 12.415 2.715 16.258l34.699 26.310c5.205 3.947 12.621 3.008 16.665-2.122 17.864-22.658 30.113-35.797 57.303-35.797 20.429 0 45.698 13.148 45.698 32.958 0 14.976-12.363 22.667-32.534 33.976C247.128 238.528 216 254.941 216 296v4c0 6.627 5.373 12 12 12h56c6.627 0 12-5.373 12-12v-1.333c0-28.462 83.186-29.647 83.186-106.667 0-58.002-60.165-102-116.531-102zM256 338c-25.365 0-46 20.635-46 46 0 25.364 20.635 46 46 46s46-20.636 46-46c0-25.365-20.635-46-46-46z"/></svg></td><td class="r"><span class="qty">504</span></td><td class="r"><span class="slc">-- Aucun prix/qté fournisseur défini pour ce produit --<svg class="chv" width="12" height="8" viewBox="0 0 12 8"><path d="M1 1.500l5 5 5-5" fill="none" stroke="#111" stroke-width="1.900"/></svg></span></td></tr>
<tr><td><span class="ck"></span></td><td class="l"><svg class="cb" width="16" height="16" viewBox="0 0 512 512"><path fill="#ad9c4e" d="M239.100 6.300l-208 78c-18.700 7-31.100 25-31.100 45v225.100c0 18.200 10.300 34.800 26.500 42.900l208 104c13.500 6.800 29.400 6.800 42.900 0l208-104c16.300-8.100 26.500-24.800 26.500-42.900V129.300c0-20-12.400-37.900-31.100-44.900l-208-78C262 2.200 250 2.200 239.100 6.300zM256 68.400l192 72v1.100l-192 78-192-78v-1.100l192-72zm32 356V275.500l160-65v133.900l-160 80z"/></svg><a>160</a></td><td class="l"><span class="nm">GR-COMBI-PS54</span></td><td class="r">0</td><td class="r">0</td><td class="r">-6322</td><td class="r"><a>270000</a></td><td class="r"><span class="qty">0</span></td><td class="r"><span class="slc">-- Aucun prix/qté fournisseur défini pour ce produit --<svg class="chv" width="12" height="8" viewBox="0 0 12 8"><path d="M1 1.500l5 5 5-5" fill="none" stroke="#111" stroke-width="1.900"/></svg></span></td></tr>
</tbody></table>
</div>
</body>
</html>
